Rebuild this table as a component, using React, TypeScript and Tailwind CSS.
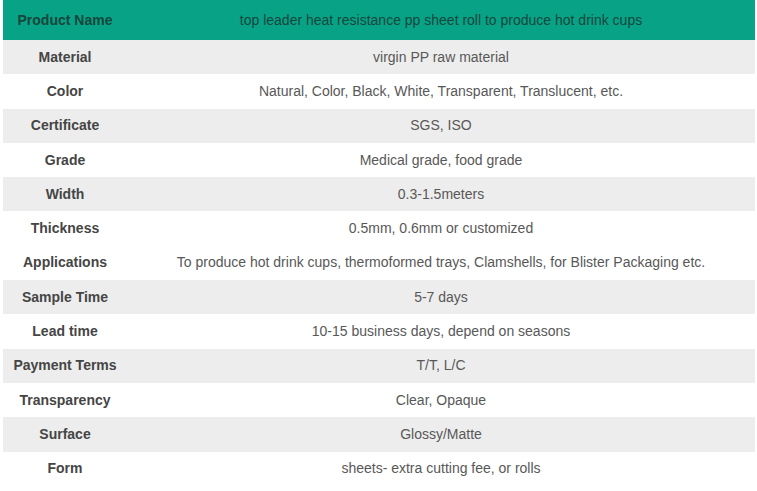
import clsx from "clsx";

interface SpecRow {
  label: string;
  value: string;
  shaded: boolean;
}

const rows: SpecRow[] = [
  { label: "Material", value: "virgin PP raw material", shaded: true },
  { label: "Color", value: "Natural, Color, Black, White, Transparent, Translucent, etc.", shaded: false },
  { label: "Certificate", value: "SGS, ISO", shaded: true },
  { label: "Grade", value: "Medical grade, food grade", shaded: false },
  { label: "Width", value: "0.3-1.5meters", shaded: true },
  { label: "Thickness", value: "0.5mm, 0.6mm or customized", shaded: false },
  {
    label: "Applications",
    value: "To produce hot drink cups, thermoformed trays, Clamshells, for Blister Packaging etc.",
    shaded: false,
  },
  { label: "Sample Time", value: "5-7 days", shaded: true },
  { label: "Lead time", value: "10-15 business days, depend on seasons", shaded: false },
  { label: "Payment Terms", value: "T/T, L/C", shaded: true },
  { label: "Transparency", value: "Clear, Opaque", shaded: false },
  { label: "Surface", value: "Glossy/Matte", shaded: true },
  { label: "Form", value: "sheets- extra cutting fee, or rolls", shaded: false },
];

export default function App() {
  return (
    <div className="min-h-[491px] bg-white pl-[3px] pt-0 font-['Liberation_Sans',Arial,sans-serif] text-[14px]">
      <div className="w-[752px]">
        <div className="grid h-[40px] grid-cols-[124px_1fr] items-center bg-[#08a386] text-[#15473d]">
          <div className="text-center font-bold">Product Name</div>
          <div className="text-center">
            top leader heat resistance pp sheet roll to produce hot drink cups
          </div>
        </div>

        {rows.map((row) => (
          <div
            key={row.label}
            className={clsx(
              "grid h-[34.3px] grid-cols-[124px_1fr] items-center",
              row.shaded ? "bg-[#ededed]" : "bg-white"
            )}
          >
            <div className="text-center font-bold text-[#454545]">{row.label}</div>
            <div className="text-center text-[#585858]">{row.value}</div>
          </div>
        ))}
      </div>
    </div>
  );
}
